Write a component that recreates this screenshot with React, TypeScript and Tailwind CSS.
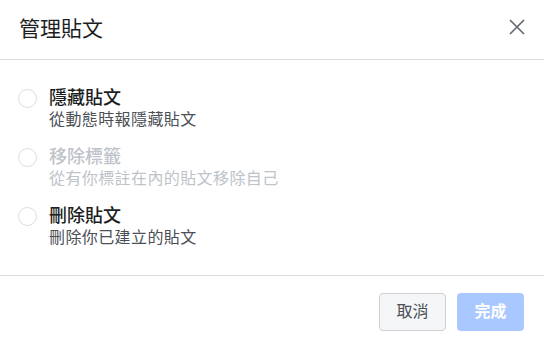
const options = [
  { title: '隱藏貼文', desc: '從動態時報隱藏貼文', disabled: false },
  { title: '移除標籤', desc: '從有你標註在內的貼文移除自己', disabled: true },
  { title: '刪除貼文', desc: '刪除你已建立的貼文', disabled: false },
];

export default function App() {
  return (
    <div
      className="w-[544px] h-[342px] bg-white overflow-hidden"
      style={{ fontFamily: '"Liberation Sans", "Noto Sans CJK TC", sans-serif' }}
    >
      <div className="h-[60px] border-b border-[#dadde1] flex items-center justify-between pl-[19px] pr-[19px]">
        <h1 className="text-[21px] leading-[26px] text-[#1c1e21] pb-[2px]">管理貼文</h1>
        <button className="w-[16px] h-[16px] text-[#606770] mb-[6px]">
          <svg viewBox="0 0 16 16" width="16" height="16" fill="none" stroke="currentColor" strokeWidth="1.6">
            <path d="M1 1 L15 15 M15 1 L1 15" />
          </svg>
        </button>
      </div>

      <div className="pt-[26px] pl-[18px] h-[216px] border-b border-[#dadde1] flex flex-col gap-[15px]">
        {options.map((o) => (
          <div key={o.title} className="flex items-start gap-[12px]">
            <span className="mt-[3px] w-[19px] h-[19px] rounded-full border border-[#dadde1] shrink-0" />
            <div className="flex flex-col">
              <span className={`text-[18px] leading-[24px] font-medium ${o.disabled ? 'text-[#bec3c9]' : 'text-[#1c1e21]'}`}>
                {o.title}
              </span>
              <span className={`text-[16px] leading-[20px] tracking-[0.4px] ${o.disabled ? 'text-[#bec3c9]' : 'text-[#4b4f56]'}`}>
                {o.desc}
              </span>
            </div>
          </div>
        ))}
      </div>

      <div className="flex justify-end gap-[11px] pt-[17px] pr-[20px]">
        <button className="w-[67px] h-[38px] rounded-[4px] border border-[#ccd0d5] bg-[#f5f6f7] text-[#4b4f56] text-[16px]">
          取消
        </button>
        <button className="w-[67px] h-[38px] rounded-[4px] bg-[#a9c8ff] text-white text-[16px] font-bold">
          完成
        </button>
      </div>
    </div>
  );
}
